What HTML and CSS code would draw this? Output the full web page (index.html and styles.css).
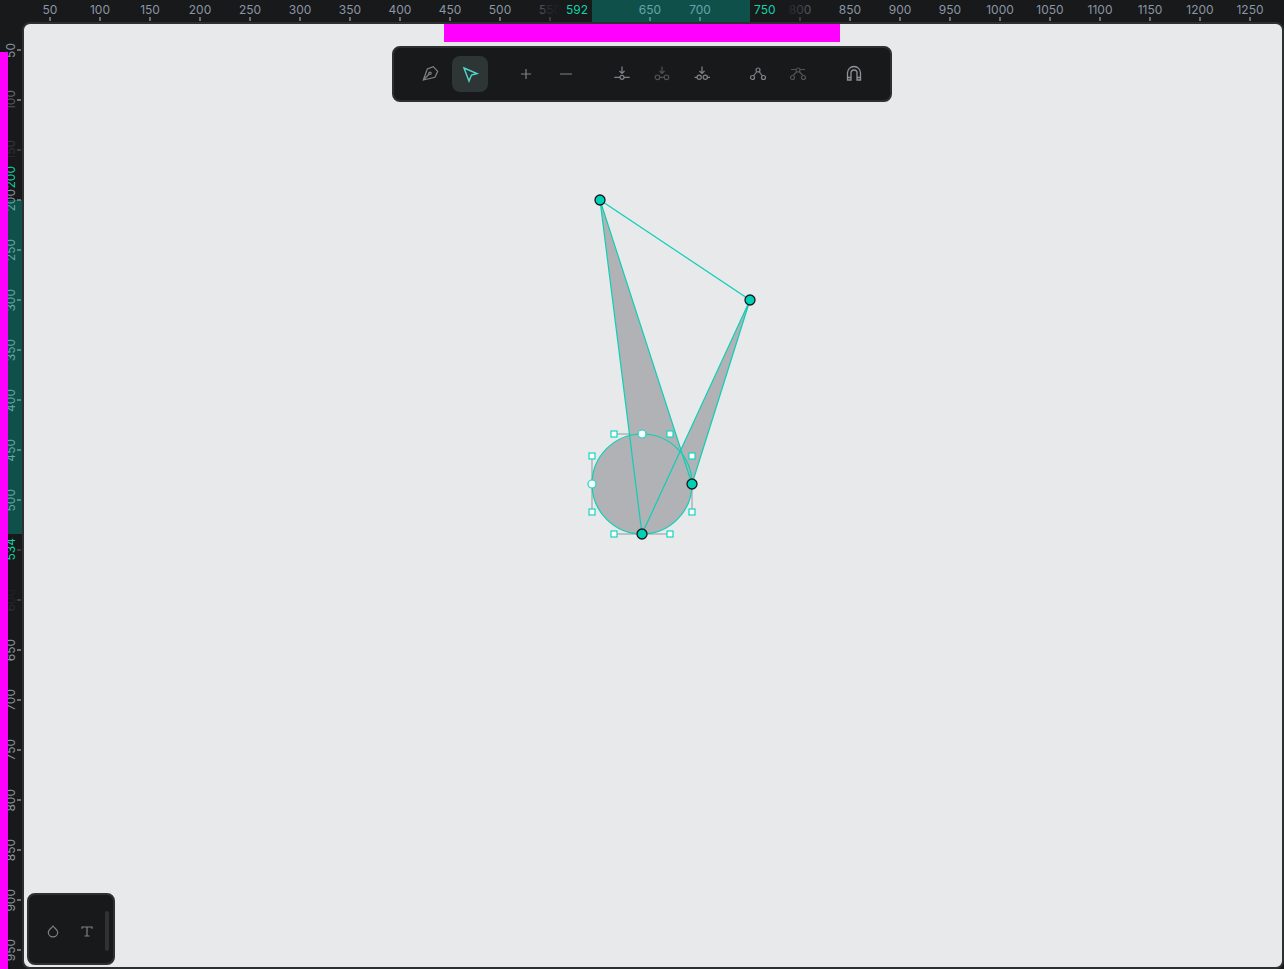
FILE: index.html
```html
<!DOCTYPE html>
<html>
<head>
    <title>Path editor</title>
    <link rel="stylesheet" href="styles.css">
</head>
<body>
    <div class="editor">
        <!-- top ruler -->
        <div class="ruler ruler-top">
            <div class="cell"><span>50</span><i></i></div>
            <div class="cell"><span>100</span><i></i></div>
            <div class="cell"><span>150</span><i></i></div>
            <div class="cell"><span>200</span><i></i></div>
            <div class="cell"><span>250</span><i></i></div>
            <div class="cell"><span>300</span><i></i></div>
            <div class="cell"><span>350</span><i></i></div>
            <div class="cell"><span>400</span><i></i></div>
            <div class="cell"><span>450</span><i></i></div>
            <div class="cell"><span>500</span><i></i></div>
            <div class="cell dim"><span>550</span><i></i></div>
            <div class="cell hidden"><span>600</span><i></i></div>
            <div class="cell"><span>650</span><i></i></div>
            <div class="cell"><span>700</span><i></i></div>
            <div class="cell hidden"><span>750</span><i></i></div>
            <div class="cell dim"><span>800</span><i></i></div>
            <div class="cell"><span>850</span><i></i></div>
            <div class="cell"><span>900</span><i></i></div>
            <div class="cell"><span>950</span><i></i></div>
            <div class="cell"><span>1000</span><i></i></div>
            <div class="cell"><span>1050</span><i></i></div>
            <div class="cell"><span>1100</span><i></i></div>
            <div class="cell"><span>1150</span><i></i></div>
            <div class="cell"><span>1200</span><i></i></div>
            <div class="cell"><span>1250</span><i></i></div>
            <div class="band band-x"></div>
            <div class="mark mark-x-start">592</div>
            <div class="mark mark-x-end">750</div>
        </div>

        <!-- left ruler -->
        <div class="ruler ruler-left">
            <div class="cell"><span>50</span><i></i></div>
            <div class="cell"><span>100</span><i></i></div>
            <div class="cell dim"><span>150</span><i></i></div>
            <div class="cell"><span>200</span><i></i></div>
            <div class="cell"><span>250</span><i></i></div>
            <div class="cell"><span>300</span><i></i></div>
            <div class="cell"><span>350</span><i></i></div>
            <div class="cell"><span>400</span><i></i></div>
            <div class="cell"><span>450</span><i></i></div>
            <div class="cell"><span>500</span><i></i></div>
            <div class="cell dim"><span>550</span><i></i></div>
            <div class="cell dim"><span>600</span><i></i></div>
            <div class="cell"><span>650</span><i></i></div>
            <div class="cell"><span>700</span><i></i></div>
            <div class="cell"><span>750</span><i></i></div>
            <div class="cell"><span>800</span><i></i></div>
            <div class="cell"><span>850</span><i></i></div>
            <div class="cell"><span>900</span><i></i></div>
            <div class="cell"><span>950</span><i></i></div>
            <div class="band band-y"></div>
            <div class="mark mark-y-start"><span>200</span></div>
            <div class="mark mark-y-end"><span>534</span></div>
        </div>

        <div class="canvas">
            <svg class="drawing" width="1258" height="943" viewBox="24 24 1258 943">
                <circle class="fill" cx="642" cy="484" r="50"/>
                <path class="fill" d="M600 200L692 484L750 300L642 534Z"/>
                <path class="box" d="M614 434H670M692 456V512M670 534H614M592 512V456"/>
                <circle class="outline" cx="642" cy="484" r="50"/>
                <path class="outline" d="M642 534L600 200L750 300L642 534M600 200L692 484L750 300"/>
                <rect class="handle" x="611" y="431" width="6" height="6"/>
                <rect class="handle" x="667" y="431" width="6" height="6"/>
                <rect class="handle" x="589" y="453" width="6" height="6"/>
                <rect class="handle" x="689" y="453" width="6" height="6"/>
                <rect class="handle" x="589" y="509" width="6" height="6"/>
                <rect class="handle" x="689" y="509" width="6" height="6"/>
                <rect class="handle" x="611" y="531" width="6" height="6"/>
                <rect class="handle" x="667" y="531" width="6" height="6"/>
                <circle class="handle" cx="642" cy="434" r="4"/>
                <circle class="handle" cx="592" cy="484" r="4"/>
                <circle class="node" cx="600" cy="200" r="5"/>
                <circle class="node" cx="750" cy="300" r="5"/>
                <circle class="node" cx="692" cy="484" r="5"/>
                <circle class="node" cx="642" cy="534" r="5"/>
            </svg>

            <div class="strip-top"></div>

            <div class="toolbar">
                <div class="group">
                    <button class="tool">
                        <svg viewBox="0 0 20 20"><path d="M3.3 16L7.3 5L13.3 2.7L17.7 7.3L15 13.3Z"/><path d="M3.3 16L9.2 10"/><circle cx="10" cy="9.3" r="1.2"/></svg>
                    </button>
                    <button class="tool active">
                        <svg viewBox="0 0 20 20"><path d="M4 4L17 9.5L11.5 11L9 17Z"/></svg>
                    </button>
                </div>
                <div class="group">
                    <button class="tool">
                        <svg viewBox="0 0 20 20"><path d="M10 5V15M5 10H15"/></svg>
                    </button>
                    <button class="tool">
                        <svg viewBox="0 0 20 20"><path d="M4 10H16"/></svg>
                    </button>
                </div>
                <div class="group">
                    <button class="tool">
                        <svg viewBox="0 0 20 20"><path d="M10 2.5V9.5M7.5 7L10 9.5L12.5 7M2.3 13.3H8M12 13.3H17.7"/><circle cx="10" cy="13.3" r="2"/></svg>
                    </button>
                    <button class="tool faint">
                        <svg viewBox="0 0 20 20"><path d="M10 2.5V9.5M7.5 7L10 9.5L12.5 7M8 13.3H12"/><circle cx="5.5" cy="13.3" r="2.3"/><circle cx="14.5" cy="13.3" r="2.3"/></svg>
                    </button>
                    <button class="tool">
                        <svg viewBox="0 0 20 20"><path d="M10 2.5V9.5M7.5 7L10 9.5L12.5 7M2.5 13.3H5M15.5 13.3H18"/><circle cx="7.2" cy="13.3" r="2.1"/><circle cx="13.3" cy="13.3" r="2.1"/></svg>
                    </button>
                </div>
                <div class="group">
                    <button class="tool">
                        <svg viewBox="0 0 20 20"><path d="M9 7.5L5.5 12M11 7.5L14.5 12"/><circle cx="10" cy="6" r="2"/><circle cx="4.5" cy="13.5" r="2"/><circle cx="15.5" cy="13.5" r="2"/></svg>
                    </button>
                    <button class="tool faint">
                        <svg viewBox="0 0 20 20"><path d="M3 5.5H8M12 5.5H17M9 7.5L5 11.5M11 7.5L15 11.5"/><circle cx="10" cy="6" r="2"/><circle cx="4.5" cy="13.5" r="2"/><circle cx="15.5" cy="13.5" r="2"/></svg>
                    </button>
                </div>
                <div class="group">
                    <button class="tool magnet">
                        <svg viewBox="0 0 20 20"><path d="M3.5 16V9A6.5 6.5 0 0 1 16.5 9V16H13V9A3 3 0 0 0 7 9V16ZM3.5 13.5H7M13 13.5H16.5"/></svg>
                    </button>
                </div>
            </div>

            <div class="panel">
                <button class="tool small">
                    <svg viewBox="0 0 20 20"><path d="M10 5C8.5 7.2 5.3 8.8 5.3 11.2A4.7 4.7 0 0 0 14.7 11.2C14.7 8.8 11.5 7.2 10 5Z"/></svg>
                </button>
                <button class="tool small">
                    <svg viewBox="0 0 20 20"><path d="M5 7.8V6H15V7.8M10 6V15M7.5 15H12.5"/></svg>
                </button>
                <div class="scrollbar"></div>
            </div>
        </div>
    </div>

    <div class="strip-left"></div>
</body>
</html>
```

FILE: styles.css
```css
body {
    margin: 0;
    background-color: #18191b;
    font-family: Inter, "Liberation Sans", sans-serif;
    overflow: hidden;
}

.editor {
    display: grid;
    grid-template-columns: 22px 1fr;
    grid-template-rows: 22px 1fr;
    width: 1284px;
    height: 969px;
}

/* rulers */
.ruler {
    position: relative;
    display: flex;
    overflow: hidden;
    color: #8b96a3;
    font-size: 12px;
    line-height: 14px;
}

.ruler-top {
    grid-column: 1 / 3;
    padding-left: 25px;
}

.ruler-left {
    flex-direction: column;
    padding-top: 3px;
    line-height: 12px;
}

.cell {
    display: flex;
    flex: none;
    align-items: center;
}

.cell i {
    flex: none;
    background-color: #6a6e71;
}

.ruler-top .cell {
    flex-direction: column;
    width: 50px;
    height: 22px;
    padding-top: 3px;
    box-sizing: border-box;
}

.ruler-top .cell i {
    width: 2px;
    height: 4px;
}

.ruler-left .cell {
    justify-content: space-between;
    width: 22px;
    height: 50px;
    padding: 0 1px 0 5px;
    box-sizing: border-box;
}

.ruler-left .cell span,
.mark-y-start span,
.mark-y-end span {
    writing-mode: vertical-rl;
    transform: rotate(180deg);
}

.ruler-left .cell i {
    width: 4px;
    height: 2px;
}

.cell.dim i {
    background-color: #3a3d3f;
}

.cell.hidden {
    visibility: hidden;
}

.band {
    position: absolute;
    background-color: rgba(0, 209, 184, 0.3);
}

.band-x {
    left: 592px;
    top: 0;
    width: 158px;
    height: 22px;
}

.band-y {
    left: 0;
    top: 178px; /* ruler starts at y 22 */
    width: 22px;
    height: 334px;
}

.mark {
    position: absolute;
    display: flex;
    color: #0ed3a8;
    box-sizing: border-box;
}

.mark-x-start {
    left: 530px;
    top: 3px;
    width: 62px;
    height: 14px;
    justify-content: flex-end;
    padding-right: 4px;
    background: linear-gradient(to right, rgba(24, 25, 27, 0) 0, rgba(24, 25, 27, 0.85) 30%, #18191b 50%);
}

.mark-x-end {
    left: 750px;
    top: 3px;
    width: 80px;
    height: 14px;
    padding-left: 4px;
    background: linear-gradient(to right, #18191b 40%, rgba(24, 25, 27, 0.65) 65%, rgba(24, 25, 27, 0) 100%);
}

.mark-y-start {
    left: 0;
    top: 58px;
    width: 17px;
    height: 108px;
    padding-left: 5px;
    align-items: flex-end;
    background: linear-gradient(to bottom, rgba(24, 25, 27, 0) 0, rgba(24, 25, 27, 0.5) 20%, rgba(24, 25, 27, 0.8) 65%, #18191b 80%);
}

.mark-y-end {
    left: 0;
    top: 512px;
    width: 17px;
    height: 100px;
    padding: 4px 0 0 5px;
    align-items: flex-start;
    background: linear-gradient(to bottom, #18191b 45%, rgba(24, 25, 27, 0.85) 75%, rgba(24, 25, 27, 0.6) 100%);
}

/* canvas */
.canvas {
    position: relative;
    border: 2px solid #2d3031;
    border-radius: 8px;
    background-color: #e8e9eb;
    overflow: hidden;
}

.drawing {
    position: absolute;
    left: 0;
    top: 0;
}

.fill {
    fill: #b1b2b5;
}

.box {
    fill: none;
    stroke: #b1b2b5;
    stroke-width: 1.5;
}

.outline {
    fill: none;
    stroke: #0ccfb6;
    stroke-width: 1.2;
}

.handle {
    fill: #fff;
    stroke: #14d6c0;
    stroke-width: 1.2;
}

.node {
    fill: #00d1b6;
    stroke: #18191b;
    stroke-width: 1.3;
}

.strip-top {
    position: absolute;
    left: 420px;
    top: 0;
    width: 396px;
    height: 18px;
    background-color: #ff00ff;
}

.strip-left {
    position: absolute;
    left: 0;
    top: 52px;
    width: 8px;
    height: 917px;
    background-color: #ff00ff;
}

/* floating tools */
.toolbar {
    position: absolute;
    left: 368px;
    top: 22px;
    display: flex;
    gap: 20px;
    width: 500px;
    height: 56px;
    padding: 8px 18px;
    box-sizing: border-box;
    background-color: #18191b;
    border: 2px solid #2d3031;
    border-radius: 8px;
}

.group {
    display: flex;
    gap: 4px;
}

.tool {
    display: flex;
    align-items: center;
    justify-content: center;
    width: 36px;
    height: 36px;
    padding: 0;
    background: none;
    border: none;
    border-radius: 8px;
    color: #7f8385;
}

.tool svg {
    width: 20px;
    height: 20px;
    fill: none;
    stroke: currentColor;
    stroke-width: 1.2;
}

.tool.active {
    background-color: #2e3535;
    color: #4fd8cc;
}

.tool.active svg {
    stroke-width: 1.4;
}

.tool.faint {
    color: #505355;
}

.tool.magnet {
    color: #8f9395;
}

.tool.magnet svg {
    stroke-width: 1.3;
}

.panel {
    position: absolute;
    left: 3px;
    bottom: 2px;
    display: flex;
    align-items: center;
    width: 88px;
    height: 72px;
    padding: 4px 0 0 7px;
    box-sizing: border-box;
    background-color: #18191b;
    border: 2px solid #2d3031;
    border-radius: 8px;
}

.tool.small {
    width: 34px;
}

.scrollbar {
    flex: none;
    width: 4px;
    height: 40px;
    margin-left: 1px;
    border-radius: 2px;
    background-color: #2f3333;
}
```
